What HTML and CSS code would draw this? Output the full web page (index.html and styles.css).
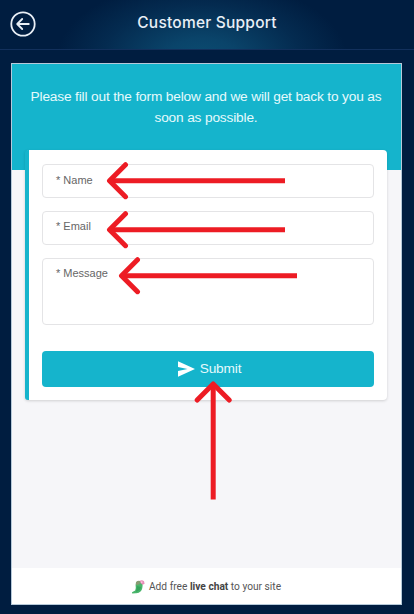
FILE: index.html
```html
<!DOCTYPE html>
<html lang="en">
<head>
<meta charset="utf-8">
<title>Customer Support</title>
<link rel="stylesheet" href="styles.css">
</head>
<body>
<header class="topbar">
  <svg class="back" viewBox="0 0 26 26" aria-hidden="true"><circle cx="13" cy="13" r="11.7"/><path d="M18.8 13H7.4M12.2 8L7.2 13l5 5"/></svg>
  <h1 class="title">Customer Support</h1>
</header>
<main class="panel">
  <div class="content">
    <p class="intro">Please fill out the form below and we will get back to you as<br>soon as possible.</p>
    <form class="card">
      <div class="field name"><span>* Name</span></div>
      <div class="field"><span>* Email</span></div>
      <div class="field message"><span>* Message</span></div>
      <button class="submit" type="button">
        <svg class="send" viewBox="0 0 17 16" aria-hidden="true"><path d="M0 .3L17 8 0 15.7V10L9.5 8 0 6z"/></svg>
        <span>Submit</span>
      </button>
    </form>
  </div>
  <footer class="footer">
    <svg class="parrot" viewBox="0 0 13 14" aria-hidden="true">
      <path fill="#49b56b" d="M4 2.2Q6 .2 9 1.3L10.6 4Q10.8 9 8.8 11.2 6.8 13.4 3.8 13.2L.2 13.4 0 12.3 3.2 10.6Q4.2 8 3.6 5z"/>
      <path fill="#8b9a73" d="M4 2.2Q6 .2 8 1l-.5 3.2L4 5z"/>
      <path fill="#37a45b" d="M5 6l4 1-1 3-4 2z"/>
      <path fill="#e98bb8" d="M7.8.8Q10-.6 12 1.2L12.6 3.8 10.6 4.8 8.6 3.2z"/>
      <path fill="#f8dce9" d="M9 1.4h1.4v1.4H9z"/>
    </svg>
    <span class="credit">Add free <b>live chat</b> to your site</span>
  </footer>
</main>
<svg class="arrows" viewBox="0 0 414 614" aria-hidden="true">
  <path class="shaft" d="M109 180.7H285M109 229.7H285M121 275.7H297M213.2 384V499.5"/>
  <path class="head" d="M125.5 164.7L109.5 180.7l16 16M125.5 213.7L109.5 229.7l16 16M137.5 259.7L121.5 275.7l16 16M197.2 400L213.2 384l16 16"/>
</svg>
</body>
</html>
```
FILE: styles.css
```css
* { box-sizing: border-box; }

body {
  margin: 0;
  width: 414px;
  height: 614px;
  overflow: hidden;
  position: relative;
  background: #001d40;
  font-family: "Liberation Sans", Arial, sans-serif;
}

.topbar {
  height: 50px;
  display: grid;
  grid-template-columns: 26px 1fr 26px;
  align-items: center;
  padding: 0 10px 3px;
  border-bottom: 1px solid #12305c;
  background: radial-gradient(ellipse 145px 78px at 202px 58px, #0b4c71 0%, #0a446a 25%, #042b50 68%, #001d40 100%);
}

.back {
  width: 26px;
  height: 26px;
  margin-top: 2px;
  fill: none;
  stroke: #e9eff6;
  stroke-width: 1.8;
  stroke-linecap: round;
  stroke-linejoin: round;
}

.title {
  margin: 0;
  text-align: center;
  font: 500 15.5px/20px Inter, sans-serif;
  letter-spacing: 0.22px;
  color: #e9eff6;
}

.panel {
  margin: 13px 11px 0;
  width: 391px;
  height: 542px;
  display: flex;
  flex-direction: column;
  border: 1px solid #b6c9d9;
  background: #fff;
}

.content {
  flex: 1;
  padding: 22px 14px 0 13px;
  background: linear-gradient(#15b4cc 106px, #f6f6f9 106px);
}

.intro {
  margin: 0 0 22px;
  height: 42px;
  text-align: center;
  white-space: nowrap;
  font-size: 13.7px;
  letter-spacing: -0.16px;
  line-height: 21px;
  color: #e6fafc;
}

.card {
  height: 250px;
  padding: 14px 13px 0;
  display: flex;
  flex-direction: column;
  gap: 13px;
  background: #fff;
  border-left: 4px solid #15b4cc;
  border-radius: 3px 4px 4px 3px;
  box-shadow: 0 1px 3px rgba(0, 0, 0, 0.16);
}

.field {
  height: 34px;
  padding: 7px 13px;
  border: 1px solid #e4e4e6;
  border-radius: 4px;
  font-size: 11px;
  line-height: 15px;
  color: #666;
}

.name { padding-top: 8px; }

.message { height: 67px; }

.submit {
  height: 36px;
  margin-top: 12.5px;
  padding: 0 0 0 3px;
  display: flex;
  align-items: center;
  justify-content: center;
  gap: 5px;
  border: 0;
  border-radius: 4px;
  background: #15b4cc;
  color: #e6fafc;
  font: 13.7px/20px "Liberation Sans", Arial, sans-serif;
  letter-spacing: -0.16px;
}

.send { width: 17px; height: 16px; fill: #fff; }

.footer {
  height: 36px;
  padding-top: 1px;
  display: flex;
  align-items: center;
  justify-content: center;
  gap: 4px;
}

.parrot { width: 13px; height: 14px; }

.credit {
  font: 10.2px/14px Roboto, sans-serif;
  color: #555;
}

.credit b { color: #444; }

.arrows {
  position: absolute;
  inset: 0;
  width: 414px;
  height: 614px;
  fill: none;
  stroke: #ed1c24;
  stroke-width: 5;
}

.head { stroke-linecap: round; stroke-linejoin: round; }
```
